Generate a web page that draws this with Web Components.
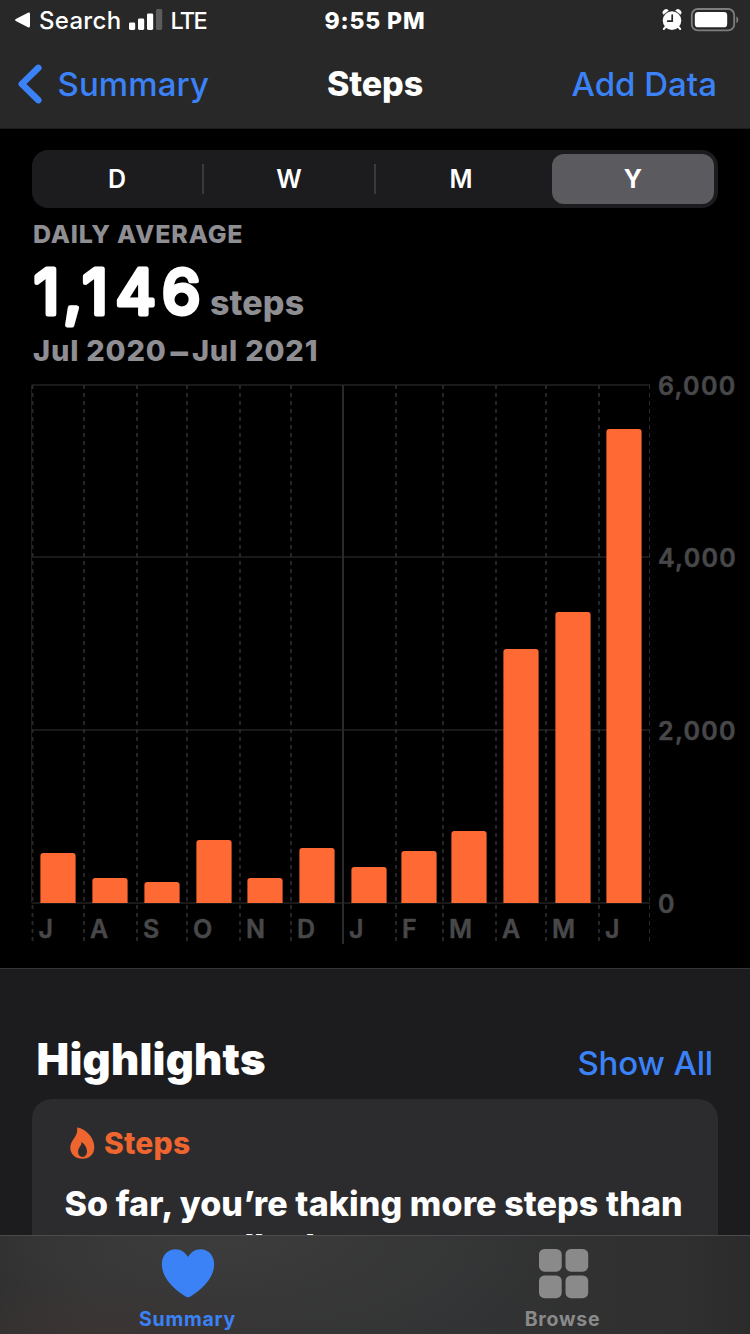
<!DOCTYPE html>
<html lang="en">
  <head>
    <meta charset="UTF-8" />
    <meta name="viewport" content="width=device-width, initial-scale=1.0" />
    <title>Steps</title>
    <style>
      html,
      body {
        margin: 0;
        height: 1334px;
        overflow: hidden;
        background: #000;
      }
      body {
        --blue: #3b82f7;
        --gray: #8e8e93;
        --orange: #ff6933;
        font-family: Inter, "Liberation Sans", sans-serif;
        color: #fff;
      }
      .dash {
        margin: 0 3px 0 4px;
        font-size: 35px;
        line-height: 0;
        vertical-align: -3px;
      }
    </style>
  </head>
  <body>
    <health-screen>
      <status-bar slot="top" back="Search" network="LTE" time="9:55 PM"></status-bar>
      <nav-bar slot="top" back="Summary" action="Add Data">Steps</nav-bar>
      <segmented-control options="D,W,M,Y" selected="Y"></segmented-control>
      <step-summary label="DAILY AVERAGE" value="1,146" unit="steps">Jul 2020<span class="dash">–</span>Jul 2021</step-summary>
      <steps-chart></steps-chart>
      <highlights-section heading="Highlights" action="Show All">
        <highlight-card heading="Steps">So far, you’re taking more steps than you normally do.</highlight-card>
      </highlights-section>
      <tab-bar slot="bottom"></tab-bar>
    </health-screen>
    <script>
      function define(name, render) {
        customElements.define(
          name,
          class extends HTMLElement {
            constructor() {
              super();
              this.attachShadow({ mode: "open" });
            }
            connectedCallback() {
              this.shadowRoot.innerHTML = render(this);
            }
          }
        );
      }

      define(
        "health-screen",
        () => `
        <style>
          :host { display: flex; flex-direction: column; width: 750px; height: 1334px; overflow: hidden; }
          header { flex: none; background: #282828; border-bottom: 1px solid #1c1c1c; }
          main { flex: 1; min-height: 0; overflow: hidden; }
        </style>
        <header><slot name="top"></slot></header>
        <main><slot></slot></main>
        <slot name="bottom"></slot>
      `
      );

      define(
        "status-bar",
        (el) => `
        <style>
          :host { display: grid; grid-template-columns: 1fr auto 1fr; align-items: center; height: 40px; line-height: 40px; }
          .left, .right { display: flex; align-items: center; }
          .left { padding-left: 14px; font-size: 24px; font-weight: 500; }
          .right { justify-content: flex-end; padding-right: 11px; }
          .back, .net, .time { padding-top: 2px; line-height: 38px; }
          .back { margin: 0 8px 0 8px; letter-spacing: 0.3px; }
          .net { margin-left: 7px; font-size: 23.5px; letter-spacing: -1.6px; }
          .time { font-size: 23px; font-weight: 800; letter-spacing: 0.85px; }
          svg { display: block; }
        </style>
        <div class="left">
          <svg width="17" height="16" viewBox="0 0 17 16"><path d="M1.8 7 14 .8Q16 0 16 2V14Q16 16 14 15.2L1.8 9Q0 8 1.8 7Z" fill="#fff"/></svg>
          <span class="back">${el.getAttribute("back")}</span>
          <svg width="34" height="22" viewBox="0 0 34 22">
            <rect x="0" y="13.5" width="6.2" height="7.5" rx="1.4" fill="#fff"/>
            <rect x="9" y="9.5" width="6.2" height="11.5" rx="1.4" fill="#fff"/>
            <rect x="18" y="4.5" width="6.2" height="16.5" rx="1.4" fill="#fff"/>
            <rect x="27" y="0" width="6.2" height="21" rx="1.4" fill="#5c5c5c"/>
          </svg>
          <span class="net">${el.getAttribute("network")}</span>
        </div>
        <div class="time">${el.getAttribute("time")}</div>
        <div class="right">
          <svg width="20" height="22" viewBox="0 0 20 22" style="margin-right: 8px">
            <path d="M1.4 5.8A3.4 3.4 0 0 1 6.8 1.6ZM18.6 5.8A3.4 3.4 0 0 0 13.2 1.6Z" fill="#fff"/>
            <path d="M4 17.5 1.8 20M16 17.5l2.2 2.5" stroke="#fff" stroke-width="2" stroke-linecap="round"/>
            <circle cx="10" cy="11.6" r="9.3" fill="#fff"/>
            <path d="M10.2 6V12.2H5.7" fill="none" stroke="#282828" stroke-width="1.7" stroke-linecap="round" stroke-linejoin="round"/>
          </svg>
          <svg width="49" height="24" viewBox="0 0 49 24">
            <rect x="1.8" y="1" width="42.4" height="21.4" rx="6" fill="none" stroke="#7e7e7e" stroke-width="1.8"/>
            <rect x="4.8" y="4" width="32.4" height="15.3" rx="3.4" fill="#fff"/>
            <path d="M46.4 8.2Q48.4 9.6 48.4 11.7Q48.4 13.8 46.4 15.2Z" fill="#7e7e7e"/>
          </svg>
        </div>
      `
      );

      define(
        "nav-bar",
        (el) => `
        <style>
          :host { display: grid; grid-template-columns: 1fr auto 1fr; align-items: center; height: 88px; line-height: 88px; color: var(--blue); font-size: 33px; font-weight: 500; }
          .back { display: flex; align-items: center; padding-left: 17px; gap: 14.5px; letter-spacing: 0.1px; }
          .title { color: #fff; font-weight: 800; font-size: 34px; letter-spacing: -0.1px; }
          .action { justify-self: end; padding-right: 33px; letter-spacing: 0; }
        </style>
        <div class="back">
          <svg width="26" height="40" viewBox="0 0 26 40"><path d="M21.3 3.9 4.8 20 21.3 36.1" fill="none" stroke="currentColor" stroke-width="6.6" stroke-linecap="round" stroke-linejoin="round"/></svg>
          <span>${el.getAttribute("back")}</span>
        </div>
        <div class="title"><slot></slot></div>
        <div class="action">${el.getAttribute("action")}</div>
      `
      );

      define("segmented-control", (el) => {
        const items = el.getAttribute("options").split(",");
        const selected = el.getAttribute("selected");
        return `
        <style>
          :host { display: flex; align-items: center; box-sizing: border-box; height: 58px; margin: 21px 32px 0; padding: 4px 4px 4px 0; border-radius: 16px; background: #1c1c1e; font-size: 25px; font-weight: 600; }
          span { flex: 1; text-align: center; line-height: 50px; }
          .on { flex: none; width: 162px; border-radius: 12px; background: #5b5a5f; font-weight: 700; }
          i { width: 2px; height: 30px; background: #3a3a3d; }
          i.off { background: none; width: 6px; }
        </style>
        ${items
          .map((o, n) => {
            const next = items[n + 1];
            const rule = next ? `<i class="${next === selected ? "off" : ""}"></i>` : "";
            return `<span class="${o === selected ? "on" : ""}">${o}</span>${rule}`;
          })
          .join("")}
      `;
      });

      define(
        "step-summary",
        (el) => `
        <style>
          :host { display: flex; flex-direction: column; height: 176px; padding-left: 32px; box-sizing: border-box; color: var(--gray); font-weight: 800; }
          .label { height: 53px; line-height: 53px; font-size: 25px; letter-spacing: 0.85px; font-weight: 800; padding-left: 1px; }
          .row { display: flex; align-items: flex-start; height: 70px; }
          /* stroked svg text gives the number its rounded corners */
          svg { display: block; flex: none; width: 178px; height: 70px; overflow: visible; }
          .num { font: 400 62px Inter, sans-serif; fill: #fff; stroke: #fff; stroke-width: 5; stroke-linejoin: round; }
          .unit { line-height: 84px; height: 70px; font-size: 34px; letter-spacing: 0.1px; font-weight: 800; }
          .range { line-height: 40px; font-size: 29px; letter-spacing: 0.8px; padding-left: 1px; }
        </style>
        <div class="label">${el.getAttribute("label")}</div>
        <div class="row">
          <svg><text class="num" x="0" y="52.5" dx="2 -3 -1.5 0.5 -1.5" textLength="166.5">${el.getAttribute("value")}</text></svg>
          <span class="unit">${el.getAttribute("unit")}</span>
        </div>
        <div class="range"><slot></slot></div>
      `
      );

      // month letter, grid line x, bar x, bar top
      const months = [
        ["J", 32.5, 40.4, 853],
        ["A", 84, 92.4, 878],
        ["S", 137, 144.4, 882],
        ["O", 187, 196.4, 840],
        ["N", 240, 247.4, 878],
        ["D", 291, 299.4, 848],
        ["J", 343, 351.4, 867],
        ["F", 396, 401.4, 851],
        ["M", 443, 451.4, 831],
        ["A", 496, 503.4, 649],
        ["M", 546, 555.4, 612],
        ["J", 599, 606.4, 429],
      ];
      const levels = [
        ["6,000", 385],
        ["4,000", 557],
        ["2,000", 730],
        ["0", 903],
      ];

      define("steps-chart", () => {
        const rows = levels
          .map(
            ([t, y]) => `<path class="h" d="M32 ${y}H650"/>
            <text x="658" y="${y + 10}">${t}</text>`
          )
          .join("");
        const cols = months
          .map(([t, x], n) => {
            const line = n === 6 ? `<path class="year" d="M${x} 385V944"/>` : `<path class="v" d="M${x} 385V941"/>`;
            return `${line}<text x="${x + 6}" y="938">${t}</text>`;
          })
          .join("");
        const bars = months
          .map(([, , x, y]) => `<path d="M${x} 903V${y + 3}q0-3 3-3h29.2q3 0 3 3V903Z" fill="var(--orange)"/>`)
          .join("");
        return `
        <style>
          :host { display: block; height: 584px; }
          svg { display: block; overflow: visible; }
          text { font-size: 25px; font-weight: 600; fill: #48484a; stroke: #48484a; stroke-width: 0.5; stroke-linejoin: round; letter-spacing: 1.3px; }
          .h { stroke: #19191a; stroke-width: 2; }
          .v { stroke: #2a2a2c; stroke-width: 1.8; stroke-dasharray: 4 4; }
          .edge { stroke-width: 1; }
          .start { stroke: #1c1c1e; stroke-width: 1; }
          .year { stroke: #2a2a2c; stroke-width: 2; }
        </style>
        <svg width="750" height="584" viewBox="0 384 750 584">
          ${rows}
          <path class="start" d="M31.5 385V903"/>
          ${cols}
          <path class="v edge" d="M649.5 385V941"/>
          ${bars}
        </svg>
      `;
      });

      define(
        "highlights-section",
        (el) => `
        <style>
          :host { display: block; height: 400px; box-sizing: border-box; border-top: 1px solid #363638; background: #1c1c1e; padding: 58px 32px 0; }
          .head { display: flex; justify-content: space-between; align-items: baseline; height: 72px; line-height: 64px; padding: 0 5px 0 4.5px; }
          .title { font-size: 43.5px; font-weight: 900; letter-spacing: 0.25px; }
          .all { color: var(--blue); font-size: 33px; font-weight: 500; letter-spacing: -0.15px; }
        </style>
        <div class="head">
          <div class="title">${el.getAttribute("heading")}</div>
          <div class="all">${el.getAttribute("action")}</div>
        </div>
        <slot></slot>
      `
      );

      define(
        "highlight-card",
        (el) => `
        <style>
          :host { display: block; height: 270px; box-sizing: border-box; border-radius: 20px; background: #2c2c2e; padding: 24px 20px 0 32.5px; }
          .head { display: flex; align-items: center; gap: 9px; height: 40px; padding-left: 5.5px; color: #ef652f; font-size: 30px; font-weight: 800; letter-spacing: 0.2px; }
          .text { width: 630px; margin-top: 20.25px; font-size: 34px; font-weight: 800; line-height: 42.5px; letter-spacing: 0.11px; }
        </style>
        <div class="head">
          <svg width="25" height="32" viewBox="0 0 25 32"><path fill-rule="evenodd" d="M7.3.4C15.8 1.6 24.3 10.4 24.3 20.1C24.3 27.4 19.6 31.8 12.4 31.8C5.1 31.8.3 27.3.3 20.6C.3 12.7 8.4 9.8 7.1 1.2Q7 .3 7.3.4ZM11.4 15.3C11.8 19.3 8.1 20.4 8.1 24.8C8.1 28 9.8 29.9 12.5 29.9C15.3 29.9 17 27.8 17 24.6C17 20.4 14.8 17.3 11.9 15.2Q11.4 14.8 11.4 15.3Z" fill="currentColor"/></svg>
          <span>${el.getAttribute("heading")}</span>
        </div>
        <div class="text"><slot></slot></div>
      `
      );

      define(
        "tab-bar",
        () => `
        <style>
          :host { display: flex; flex: none; box-sizing: border-box; height: 99px; border-top: 1px solid #4b4b4c; font-size: 19.5px; font-weight: 650; letter-spacing: 0.75px;
            background: radial-gradient(ellipse 200px 60px at 100px 100px, #3b3433, transparent), radial-gradient(ellipse 330px 130px at 230px 0, #3c3c3c, transparent), linear-gradient(90deg, #2e2e2e, #343434 15%, #323334 60%, #303030 90%, #2b2b2b); }
          div { flex: 1; display: flex; flex-direction: column; align-items: center; }
          svg { display: block; margin-top: 13px; height: 50px; }
          span { line-height: 24px; margin-top: 8px; }
          .on { color: var(--blue); }
          .off { color: #8a8a8a; }
        </style>
        <div class="on">
          <svg width="54" viewBox="0 0 54 50" style="margin-left: 1px"><path d="M27 8C30 3 34.5 .3 39.5 .3C47.5 .3 53.2 6.7 53.2 15.5C53.2 27.5 42.5 39.5 30.6 46.7Q28.2 48.3 27 48.3Q25.8 48.3 23.4 46.7C11.5 39.5 .8 27.5 .8 15.5C.8 6.7 6.5 .3 14.5 .3C19.5 .3 24 3 27 8Z" fill="currentColor"/></svg>
          <span>Summary</span>
        </div>
        <div class="off">
          <svg width="50" viewBox="0 0 50 50" style="margin-left: 2px" fill="currentColor">
            <rect x="0" y="0" width="22.7" height="22.7" rx="5.5"/>
            <rect x="26.5" y="0" width="22.7" height="22.7" rx="5.5"/>
            <rect x="0" y="26.5" width="22.7" height="22.7" rx="5.5"/>
            <rect x="26.5" y="26.5" width="22.7" height="22.7" rx="5.5"/>
          </svg>
          <span>Browse</span>
        </div>
      `
      );
    </script>
  </body>
</html>
